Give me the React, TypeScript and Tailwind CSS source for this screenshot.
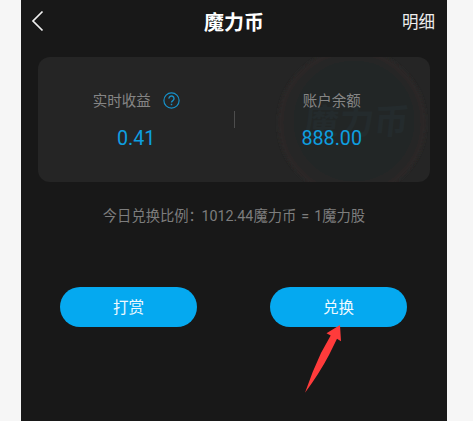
import React from 'react';
import { clsx } from 'clsx';

interface StatProps {
  label: string;
  value: string;
  className?: string;
  children?: React.ReactNode;
}

/**
 * Faint coin artwork behind the balance
 */
function CoinWatermark(): React.JSX.Element {
  return (
    <svg className="absolute right-0 top-0" width="160" height="125" viewBox="0 0 160 125" aria-hidden="true">
      <defs>
        <filter id="coin-soft" x="-10%" y="-10%" width="120%" height="120%">
          <feGaussianBlur stdDeviation="1.5" />
        </filter>
      </defs>
      <g filter="url(#coin-soft)">
        <circle cx="82" cy="66" r="71" fill="#252626" stroke="#292826" strokeWidth="6" />
        <circle cx="84" cy="64" r="60" fill="#242626" />
      </g>
      <text
        x="35"
        y="77"
        fill="#242b2d"
        fontFamily="'Noto Sans CJK SC', sans-serif"
        fontSize="35"
        fontWeight="700"
        transform="skewX(-6) translate(6 0)"
      >
        魔力币
      </text>
    </svg>
  );
}

function HelpIcon(): React.JSX.Element {
  return (
    <svg
      className="-mt-px ml-3"
      width="17"
      height="17"
      viewBox="0 0 17 17"
      fill="none"
      stroke="#1790c8"
      aria-hidden="true"
    >
      <circle cx="8.5" cy="8.5" r="7.6" strokeWidth="1.2" />
      <path d="M6 6.6a2.5 2.5 0 1 1 4 1.9c-.9.7-1.5 1.1-1.5 2.1" strokeWidth="1.4" />
      <path d="M8.5 11.7v1.5" strokeWidth="1.5" />
    </svg>
  );
}

function Stat({ label, value, className, children }: StatProps): React.JSX.Element {
  return (
    <div className={clsx('relative flex flex-1 flex-col items-center', className)}>
      <div className="flex h-5 items-center text-[14.5px] text-[#858585]">
        <span className="pt-px">{label}</span>
        {children}
      </div>
      <div className="mt-4 text-[19.7px] leading-6 text-[#0e9fe0]">{value}</div>
    </div>
  );
}

function ActionButton({ label }: { label: string }): React.JSX.Element {
  return (
    <button className="h-10 w-[137px] rounded-full bg-[#05a9f0] pt-[2px] text-[15.5px] leading-5 text-[#effaff]">
      {label}
    </button>
  );
}

export default function App(): React.JSX.Element {
  return (
    <div className="h-[421px] w-[473px] overflow-hidden bg-[#f6f6f6] pl-[21px] font-[Roboto,'Noto_Sans_CJK_SC',sans-serif]">
      <main className="relative h-full w-[426px] bg-[#181818]">
        <header className="grid h-[57px] grid-cols-3 pb-[14px] text-white">
          <div className="flex items-center pl-[10px]">
            <svg className="-mt-px" width="13" height="22" viewBox="0 0 13 22" fill="none" stroke="#f0f0f0" strokeWidth="1.7">
              <path d="M11.5 1.5 2 11l9.5 9.5" />
            </svg>
          </div>
          <h1 className="flex items-center justify-center pt-[2px] text-[20px] font-bold">魔力币</h1>
          <div className="flex items-center justify-end pr-[12px] pt-[4px] text-[16.5px] text-[#eeeeee]">明细</div>
        </header>

        {/* Earnings and balance */}
        <section className="relative mx-[17px] flex h-[125px] overflow-hidden rounded-xl bg-[#252525] pt-[34px]">
          <CoinWatermark />
          <Stat label="实时收益" value="0.41" className="pl-px">
            <HelpIcon />
          </Stat>
          <div className="relative mt-[20px] h-[17px] w-px bg-[#4d4d4d]" />
          <Stat label="账户余额" value="888.00" className="pr-px" />
        </section>

        <p className="mt-[24px] text-center text-[14.3px] leading-5 text-[#7d7d7d] [word-spacing:1.5px]">
          今日兑换比例<span className="tracking-[-1.5px]">：</span>1012.44魔力币 = 1魔力股
        </p>

        <div className="mt-[61px] flex justify-between pl-[39px] pr-[40px]">
          <ActionButton label="打赏" />
          <ActionButton label="兑换" />
        </div>

        {/* Pointer to the exchange button */}
        <svg className="absolute left-[284px] top-[325px]" width="37" height="68" viewBox="0 0 37 68" aria-hidden="true">
          <path d="M35 0 36 16.200 32 13.800 24 30Q14 49 0 67.700 7 47 16 28L25.700 10.500 21.500 8.300Z" fill="#ff3b3b" />
        </svg>
      </main>
    </div>
  );
}
